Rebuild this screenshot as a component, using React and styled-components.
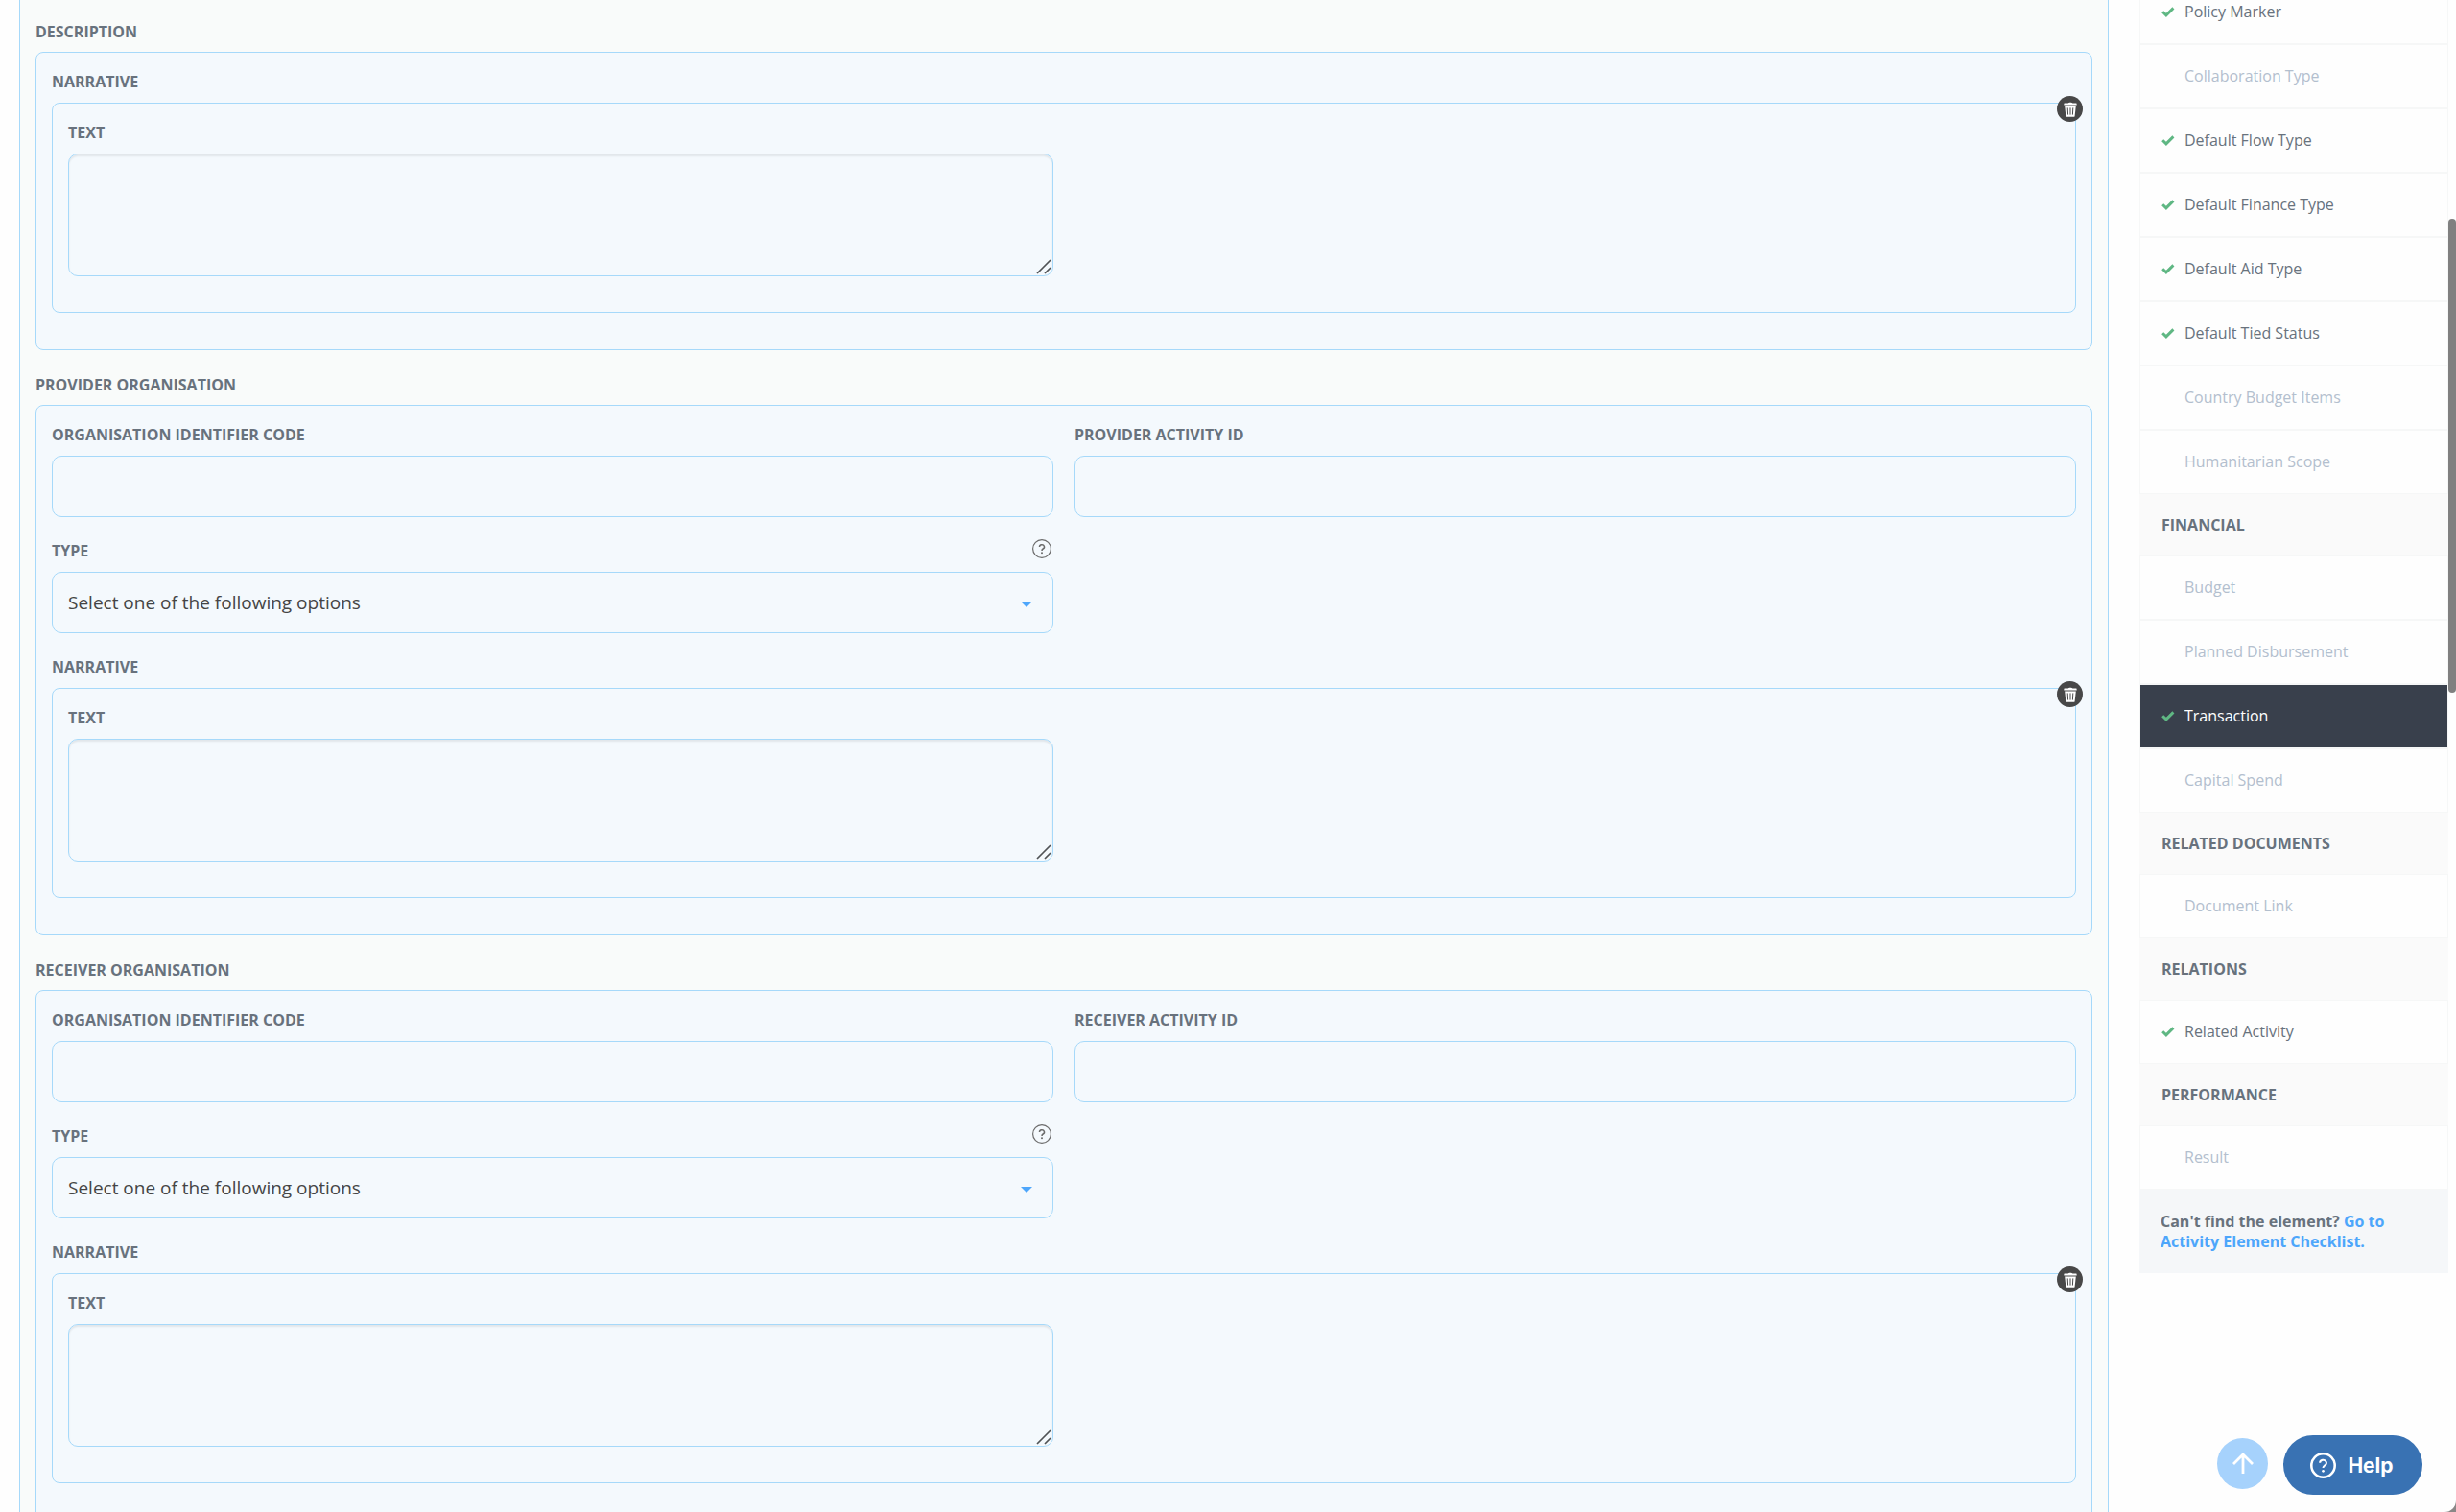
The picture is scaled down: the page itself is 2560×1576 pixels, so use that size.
import React, { useId } from 'react';
import styled, { createGlobalStyle, css } from 'styled-components';

const GlobalStyle = createGlobalStyle`
  *,
  *::before,
  *::after {
    box-sizing: border-box;
  }

  body {
    margin: 0;
    color: #68727d;
    background-color: #8a8787;
    font-family: 'Open Sans', 'Noto Sans', sans-serif;
    font-size: 16px;
  }
`;

const Page = styled.div`
  position: relative;
  display: flex;
  align-items: flex-start;
  gap: 32px;
  height: 100vh;
  padding: 0 8px 0 20px;
  overflow: hidden;
  background-color: #fefefe;
  border-bottom-right-radius: 12px;
`;

const Form = styled.form`
  flex: 1;
  min-width: 0;
  padding: 24px 16px 26px;
  background-color: #f9fbfa;
  border: solid #a6d9fa;
  border-width: 0 1px;
`;

const labelText = css`
  font-size: 16px;
  font-weight: 700;
  line-height: 18px;
  text-transform: uppercase;
`;

const SectionTitle = styled.h3`
  ${labelText}
  margin: 0 0 12px;
`;

const NarrativeTitle = styled.h4`
  ${labelText}
  margin: 0 0 13px;
`;

const Box = styled.div`
  position: relative;
  padding: 21px 16px 37px;
  background-color: #f4f9fd;
  border: 1px solid #a6d9fa;
  border-radius: 8px;
`;

const Section = styled.section`
  & + & {
    margin-top: 27px;
  }

  > ${Box} {
    padding-bottom: 38px;
  }
`;

const Grid = styled.div`
  display: grid;
  grid-template-columns: repeat(2, minmax(0, 1fr));
  gap: 26px 22px;
`;

const Wide = styled.div`
  grid-column: 1 / -1;
`;

const FieldWrapper = styled.div`
  grid-column-start: ${({ $newRow }) => ($newRow ? 1 : 'auto')};
`;

const LabelRow = styled.div`
  display: flex;
  align-items: center;
  justify-content: space-between;
  height: 18px;
  margin-bottom: 13px;
`;

const Label = styled.label`
  ${labelText}
`;

const HintButton = styled.button`
  display: flex;
  padding: 0 2px 4px;
  color: #6b6b6b;
  background: none;
  border: none;
  cursor: pointer;
`;

const control = css`
  display: block;
  width: 100%;
  color: #454545;
  font-family: inherit;
  font-size: 19px;
  background-color: transparent;
  border: 1px solid #a6d9fa;
  border-radius: 10px;
  outline: none;
`;

const Input = styled.input`
  ${control}
  height: 64px;
  padding: 0 16px;
`;

const Select = styled.select`
  ${control}
  height: 64px;
  padding: 0 48px 0 16px;
  appearance: none;
`;

const TextArea = styled.textarea`
  ${control}
  height: 128px;
  padding: 12px 16px;
  resize: none;
  box-shadow: inset 0 2px 2px rgba(0, 0, 0, 0.08);
`;

const ControlWrapper = styled.div`
  position: relative;
`;

const Caret = styled.svg`
  position: absolute;
  top: 31px;
  right: 22px;
  pointer-events: none;
`;

const Grip = styled.svg`
  position: absolute;
  right: 2px;
  bottom: 2px;
  pointer-events: none;
`;

const DeleteButton = styled.button`
  position: absolute;
  top: -8px;
  right: -8px;
  display: flex;
  align-items: center;
  justify-content: center;
  width: 27px;
  height: 27px;
  padding: 0;
  background-color: #484848;
  border: none;
  border-radius: 50%;
  cursor: pointer;
`;

const Sidebar = styled.nav`
  flex: 0 0 322px;
  margin-top: -21px;
`;

const List = styled.ul`
  margin: 0;
  padding: 0;
  list-style: none;
`;

const GroupTitle = styled.h4`
  display: flex;
  align-items: center;
  height: 64px;
  margin: 0;
  padding: 0 22px;
  background-color: #fafafa;
`;

const GroupName = styled.span`
  ${labelText}
  line-height: 22px;
  border-left: 1px solid #e6eff8;
`;

const ItemLink = styled.a`
  display: flex;
  align-items: center;
  gap: 10px;
  height: 67px;
  padding: 0 22px 2px;
  color: ${({ $active, $done }) => ($active ? '#fff' : $done ? '#68727d' : '#b3bfce')};
  text-decoration: none;
  background-color: ${({ $active }) => ($active ? '#39404c' : '#fefefe')};
  background-clip: padding-box;
  border: 1px solid #f6f7f7;
`;

const CheckSlot = styled.span`
  display: flex;
  width: 14px;
`;

const Footer = styled.p`
  margin: 0;
  padding: 23px 22px 22px;
  font-weight: 700;
  line-height: 21px;
  background-color: #f5f7f9;
`;

const FooterLink = styled.a`
  color: #4da6fb;
  text-decoration: none;
`;

const ScrollThumb = styled.div`
  position: absolute;
  top: 228px;
  right: 0;
  width: 8px;
  height: 494px;
  background-color: #808080;
  border-radius: 4px;
`;

const Floating = styled.div`
  position: absolute;
  right: 35px;
  bottom: 18px;
  display: flex;
  align-items: center;
  gap: 16px;
`;

const TopButton = styled.button`
  display: flex;
  align-items: center;
  justify-content: center;
  width: 53px;
  height: 53px;
  margin-bottom: 4px;
  padding: 0;
  background-color: #a6d2fc;
  border: none;
  border-radius: 50%;
  cursor: pointer;
`;

const HelpButton = styled.button`
  display: flex;
  align-items: center;
  justify-content: center;
  gap: 12px;
  width: 145px;
  height: 62px;
  padding: 0 2px 0 0;
  color: #fff;
  font-family: Inter, sans-serif;
  font-size: 21px;
  font-weight: 700;
  background-color: #3972b3;
  border: none;
  border-radius: 31px;
  cursor: pointer;
`;

const TrashIcon = () => (
  <svg width="14" height="16" viewBox="0 0 14 16" fill="none" aria-hidden="true">
    <path d="M4.6 1.6C5 .6 9 .6 9.4 1.6H13c.5 0 .7.4.7 1.9H.3C.3 2 .5 1.6 1 1.6z" fill="#fff" />
    <path d="M1.2 4.4h11.6L11.6 15c-.1.6-.3.8-.9.8H3.3c-.6 0-.8-.2-.9-.8z" fill="#fff" />
    <path d="M4.2 6.4l.4 7.2M7 6.4v7.2M9.8 6.4l-.4 7.2" stroke="#484848" strokeWidth="1" />
  </svg>
);

const CheckIcon = () => (
  <svg width="14" height="12" viewBox="0 0 14 12" fill="none" aria-hidden="true">
    <path d="M1.2 6.3l3.7 3.6L12.4 2.4" stroke="#5fb783" strokeWidth="2.9" />
  </svg>
);

const QuestionIcon = ({ size, stroke }) => (
  <svg width={size} height={size} viewBox="0 0 20 20" fill="none" aria-hidden="true">
    <circle cx="10" cy="10" r={10 - stroke / 2} stroke="currentColor" strokeWidth={stroke} />
    <path
      d="M7.5 8a2.5 2.3 0 1 1 3.7 2c-.8.5-1.2.9-1.2 1.9"
      stroke="currentColor"
      strokeWidth="1.5"
    />
    <circle cx="10" cy="14.3" r="1" fill="currentColor" />
  </svg>
);

const ArrowUpIcon = () => (
  <svg width="22" height="22" viewBox="0 0 22 22" fill="none" aria-hidden="true">
    <path d="M11 22V2M1 12L11 2l10 10" stroke="#fff" strokeWidth="2.8" />
  </svg>
);

const Field = ({ label, type = 'text', hint, newRow }) => {
  const id = useId();

  return (
    <FieldWrapper $newRow={newRow}>
      <LabelRow>
        <Label htmlFor={id}>{label}</Label>
        {hint && (
          <HintButton type="button" aria-label={`${label} help`}>
            <QuestionIcon size={20} stroke={1.2} />
          </HintButton>
        )}
      </LabelRow>
      {type === 'text' && <Input id={id} />}
      {type === 'select' && (
        <ControlWrapper>
          <Select id={id}>
            <option>Select one of the following options</option>
          </Select>
          <Caret width="12" height="6" viewBox="0 0 12 6" aria-hidden="true">
            <path d="M0 0h12L6 6z" fill="#4da6fb" />
          </Caret>
        </ControlWrapper>
      )}
      {type === 'textarea' && (
        <ControlWrapper>
          <TextArea id={id} />
          <Grip width="16" height="16" viewBox="0 0 16 16" aria-hidden="true">
            <path d="M1 15L15 1M9 15l6-6" stroke="#505356" strokeWidth="1.7" />
          </Grip>
        </ControlWrapper>
      )}
    </FieldWrapper>
  );
};

const Narrative = () => (
  <Wide>
    <NarrativeTitle>Narrative</NarrativeTitle>
    <Box>
      <DeleteButton type="button" aria-label="Delete narrative">
        <TrashIcon />
      </DeleteButton>
      <Grid>
        <Field label="Text" type="textarea" />
      </Grid>
    </Box>
  </Wide>
);

const Organisation = ({ role }) => (
  <Section>
    <SectionTitle>{role} Organisation</SectionTitle>
    <Box>
      <Grid>
        <Field label="Organisation Identifier Code" />
        <Field label={`${role} Activity ID`} />
        <Field label="Type" type="select" hint newRow />
        <Narrative />
      </Grid>
    </Box>
  </Section>
);

const groups = [
  {
    items: [
      { name: 'Policy Marker', done: true },
      { name: 'Collaboration Type' },
      { name: 'Default Flow Type', done: true },
      { name: 'Default Finance Type', done: true },
      { name: 'Default Aid Type', done: true },
      { name: 'Default Tied Status', done: true },
      { name: 'Country Budget Items' },
      { name: 'Humanitarian Scope' },
    ],
  },
  {
    title: 'Financial',
    items: [
      { name: 'Budget' },
      { name: 'Planned Disbursement' },
      { name: 'Transaction', done: true, active: true },
      { name: 'Capital Spend' },
    ],
  },
  { title: 'Related Documents', items: [{ name: 'Document Link' }] },
  { title: 'Relations', items: [{ name: 'Related Activity', done: true }] },
  { title: 'Performance', items: [{ name: 'Result' }] },
];

const App = () => (
  <>
    <GlobalStyle />
    <Page>
      <Form>
        <Section>
          <SectionTitle>Description</SectionTitle>
          <Box>
            <Narrative />
          </Box>
        </Section>
        <Organisation role="Provider" />
        <Organisation role="Receiver" />
      </Form>
      <Sidebar>
        {groups.map(({ title, items }) => (
          <React.Fragment key={items[0].name}>
            {title && (
              <GroupTitle>
                <GroupName>{title}</GroupName>
              </GroupTitle>
            )}
            <List>
              {items.map(({ name, done, active }) => (
                <li key={name}>
                  <ItemLink href="#" $done={done} $active={active}>
                    <CheckSlot>{done && <CheckIcon />}</CheckSlot>
                    {name}
                  </ItemLink>
                </li>
              ))}
            </List>
          </React.Fragment>
        ))}
        <Footer>
          Can't find the element? <FooterLink href="#">Go to Activity Element Checklist.</FooterLink>
        </Footer>
      </Sidebar>
      <ScrollThumb />
      <Floating>
        <TopButton type="button" aria-label="Back to top">
          <ArrowUpIcon />
        </TopButton>
        <HelpButton type="button">
          <QuestionIcon size={27} stroke={1.9} />
          Help
        </HelpButton>
      </Floating>
    </Page>
  </>
);

export default App;
